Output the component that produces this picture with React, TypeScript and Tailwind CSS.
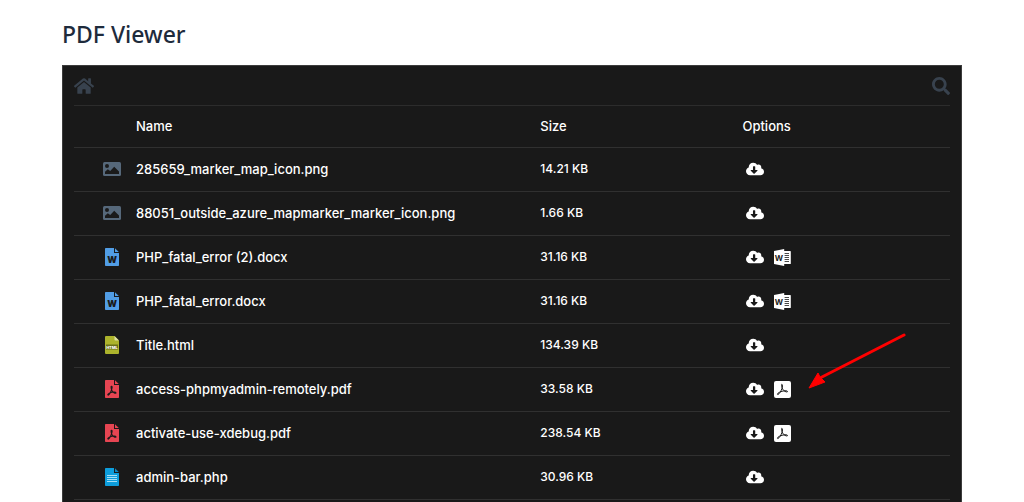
import type { ReactNode } from "react";
import { FaCloudDownloadAlt, FaHome, FaSearch } from "react-icons/fa";

type Kind = "image" | "word" | "html" | "pdf" | "text";

type FileRow = {
  name: string;
  size: string;
  kind: Kind;
};

const files: FileRow[] = [
  { name: "285659_marker_map_icon.png", size: "14.21 KB", kind: "image" },
  { name: "88051_outside_azure_mapmarker_marker_icon.png", size: "1.66 KB", kind: "image" },
  { name: "PHP_fatal_error (2).docx", size: "31.16 KB", kind: "word" },
  { name: "PHP_fatal_error.docx", size: "31.16 KB", kind: "word" },
  { name: "Title.html", size: "134.39 KB", kind: "html" },
  { name: "access-phpmyadmin-remotely.pdf", size: "33.58 KB", kind: "pdf" },
  { name: "activate-use-xdebug.pdf", size: "238.54 KB", kind: "pdf" },
  { name: "admin-bar.php", size: "30.96 KB", kind: "text" },
];

function ImageIcon() {
  return (
    <svg viewBox="0 0 18 14" className="h-3.5 w-[18px]">
      <rect width="18" height="14" rx="1.5" fill="#56687a" />
      <circle cx="4" cy="4" r="2" fill="#1a1a1a" />
      <path d="M2 12V9.800l2.800-2.600 2.400 1.800 4-4.200 4.800 4.800V12z" fill="#1a1a1a" />
    </svg>
  );
}

// blank page with the folded corner, shared by all document types
function Sheet({ fill, fold, children }: { fill: string; fold: string; children: ReactNode }) {
  return (
    <svg viewBox="0 0 14 18" className="h-[18px] w-3.5">
      <path d="M.8 0H9v5h5v12.2a.8.8 0 0 1-.8.8H.8a.8.8 0 0 1-.8-.8V.8A.8.8 0 0 1 .8 0z" fill={fill} />
      <path d="M10 .2 13.8 4H10z" fill={fold} />
      {children}
    </svg>
  );
}

function FileIcon({ kind }: { kind: Kind }) {
  if (kind === "image") return <ImageIcon />;
  if (kind === "word") {
    return (
      <Sheet fill="#519de5" fold="#519de5">
        <text x="7" y="15" textAnchor="middle" fontSize="9" fontWeight="900" fill="#1a1a1a" fontFamily="Inter, sans-serif">
          W
        </text>
      </Sheet>
    );
  }
  if (kind === "html") {
    return (
      <svg viewBox="0 0 14 18" className="h-[18px] w-3.5">
        <path d="M1 0h8.500L14 4.500V17a1 1 0 0 1-1 1H1a1 1 0 0 1-1-1V1a1 1 0 0 1 1-1z" fill="#acb32c" />
        <path d="M9.500 0 14 4.500h-3.700a.8.8 0 0 1-.8-.8z" fill="#dde0a4" />
        <rect x="1" y="8.500" width="12" height="5" fill="#69701a" />
        <text x="7" y="12.500" textAnchor="middle" fontSize="4" fontWeight="800" fill="#fff" fontFamily="Inter, sans-serif">
          HTML
        </text>
      </svg>
    );
  }
  if (kind === "pdf") {
    return (
      <Sheet fill="#e64552" fold="#e64552">
        <path
          d="M6.3 6.2c1.4-.2.7 2.5.1 4C5.7 12 4.5 15 3.2 15.1c-1.2 0 .2-1.7 2.6-2.5 1.8-.6 5-1 5.2.2.2 1.1-2.4.3-3.7-1.6-.8-1.2-1.8-4.8-1-5z"
          fill="none"
          stroke="#1a1a1a"
          strokeWidth="1.1"
        />
      </Sheet>
    );
  }
  return (
    <Sheet fill="#0d9ddb" fold="#0d86bd">
      <path d="M2 7.500h10M2 9.500h10M2 11.500h10M2 13.500h10" stroke="#a5def5" strokeWidth="1" />
    </Sheet>
  );
}

function WordViewIcon() {
  return (
    <svg viewBox="0 0 17 17" className="size-[17px]">
      <path d="M10 2h6.200a.6.6 0 0 1 .6.6v11.800a.6.6 0 0 1-.6.6H10z" fill="#fff" />
      <path d="M10.500 4.500h4.500M10.500 6.500h4.500M10.500 8.500h4.500M10.500 10.500h4.500M10.500 12.500h4.500" stroke="#1a1a1a" strokeWidth=".8" />
      <path d="M0 2 10.200 0v17L0 15z" fill="#fff" />
      <text x="5" y="11.500" textAnchor="middle" fontSize="8" fontWeight="700" fill="#1a1a1a" fontFamily="Inter, sans-serif">
        W
      </text>
    </svg>
  );
}

function PdfViewIcon() {
  return (
    <svg viewBox="0 0 17 17" className="size-[17px]">
      <rect width="17" height="17" rx="2" fill="#fff" />
      <path
        d="M7.800 3.300c1.100 0 .7 2.700.1 4.400-.8 2.200-2.600 5.500-4 5.800-1.300.2-.1-1.900 3-2.900 2.500-.8 6.300-1.300 6.600-.2.3 1.200-2.800.4-4.300-1.500C8 7.400 6.900 3.300 7.800 3.300z"
        fill="none"
        stroke="#1a1a1a"
        strokeWidth="1"
      />
    </svg>
  );
}

function Arrow() {
  return (
    <svg viewBox="0 0 100 60" className="pointer-events-none absolute -top-12 left-16 h-[60px] w-[100px]">
      <path d="M98 3 14 46" stroke="#ff0000" strokeWidth="3" strokeLinecap="round" />
      <path d="M3 56 12 41l2 4 5 5z" fill="#ff0000" stroke="#ff0000" strokeLinejoin="round" />
    </svg>
  );
}

export default function App() {
  return (
    <main className="mx-auto max-w-[924px] px-3 pt-4 font-['Inter',sans-serif]">
      <h1 className="font-['Noto_Sans',sans-serif] text-[23px] leading-9 font-medium text-[#1e2b3c]">PDF Viewer</h1>

      <section className="mt-[13px] border border-[#3c3c3c] bg-[#191919] px-[11px] pb-3 text-white">
        <div className="flex h-10 items-center justify-between border-b border-[#2c2c2c] text-[#38424e]">
          <button type="button" aria-label="Home">
            <FaHome className="size-5" />
          </button>
          <button type="button" aria-label="Search">
            <FaSearch className="size-[18px]" />
          </button>
        </div>

        <table className="w-full table-fixed text-left text-[13px] leading-5 font-medium">
          <thead>
            <tr className="h-[41px] border-b border-[#303030]">
              <th className="w-[62px]" aria-label="Type" />
              <th className="w-6/13 font-medium">Name</th>
              <th className="w-3/13 font-medium">Size</th>
              <th className="font-medium">Options</th>
            </tr>
          </thead>
          <tbody>
            {files.map((file) => (
              <tr key={file.name} className="h-11 border-b border-[#303030]">
                <td>
                  <div className="ml-[29px] flex w-[18px] justify-center">
                    <FileIcon kind={file.kind} />
                  </div>
                </td>
                <td>{file.name}</td>
                <td className="text-xs">{file.size}</td>
                <td>
                  <div className="relative flex items-center gap-2.5 pl-1">
                    <button type="button" aria-label={`Download ${file.name}`}>
                      <FaCloudDownloadAlt className="size-[18px]" />
                    </button>
                    {file.kind === "word" && (
                      <button type="button" aria-label={`View ${file.name}`}>
                        <WordViewIcon />
                      </button>
                    )}
                    {file.kind === "pdf" && (
                      <button type="button" aria-label={`View ${file.name}`}>
                        <PdfViewIcon />
                      </button>
                    )}
                    {file.name.startsWith("access-") && <Arrow />}
                  </div>
                </td>
              </tr>
            ))}
          </tbody>
        </table>
      </section>
    </main>
  );
}
